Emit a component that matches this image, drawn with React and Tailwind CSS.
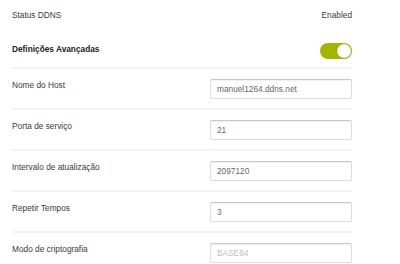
import React from 'react';

const rows = [
  { label: 'Nome do Host', value: 'manuel1264.ddns.net' },
  { label: 'Porta de serviço', value: '21' },
  { label: 'Intervalo de atualização', value: '2097120' },
  { label: 'Repetir Tempos', value: '3' },
  { label: 'Modo de criptografia', placeholder: 'BASE64' },
];

export default function App() {
  return (
    <div className="w-[400px] h-[264px] overflow-hidden bg-white font-['Liberation_Sans',Arial,sans-serif] text-[8.3px] text-[#3a3a3a]">
      <div className="ml-[12px] w-[340px]">
        {/* Status */}
        <div className="flex items-center justify-between h-[30px]">
          <span>Status DDNS</span>
          <span>Enabled</span>
        </div>

        {/* Advanced toggle */}
        <div className="flex items-center justify-between h-[39px] pt-[2px] border-b-2 border-[#f3f3f3]">
          <span className="font-bold text-[#222]">Definições Avançadas</span>
          <div className="relative w-[32px] h-[16px] rounded-full bg-[#a5b400] mt-[3px]">
            <div className="absolute right-[1px] top-[1px] w-[14px] h-[14px] rounded-full bg-white shadow-[0_0_1px_rgba(0,0,0,0.4)]" />
          </div>
        </div>

        {/* Fields */}
        {rows.map((row) => (
          <div
            key={row.label}
            className="flex items-start justify-between h-[41px] pt-[10px] border-b-2 border-[#f3f3f3]"
          >
            <span className="pt-[1px] leading-[10px]">{row.label}</span>
            <input
              readOnly
              defaultValue={row.value}
              placeholder={row.placeholder}
              className="w-[142px] h-[20px] px-[6px] rounded-[2px] border border-[#dcdcdc] border-t-[#c8c8c8] shadow-[inset_0_1px_1px_rgba(0,0,0,0.06)] text-[8.3px] text-[#666] placeholder:text-[#bdbdbd] outline-none"
            />
          </div>
        ))}
      </div>
    </div>
  );
}
